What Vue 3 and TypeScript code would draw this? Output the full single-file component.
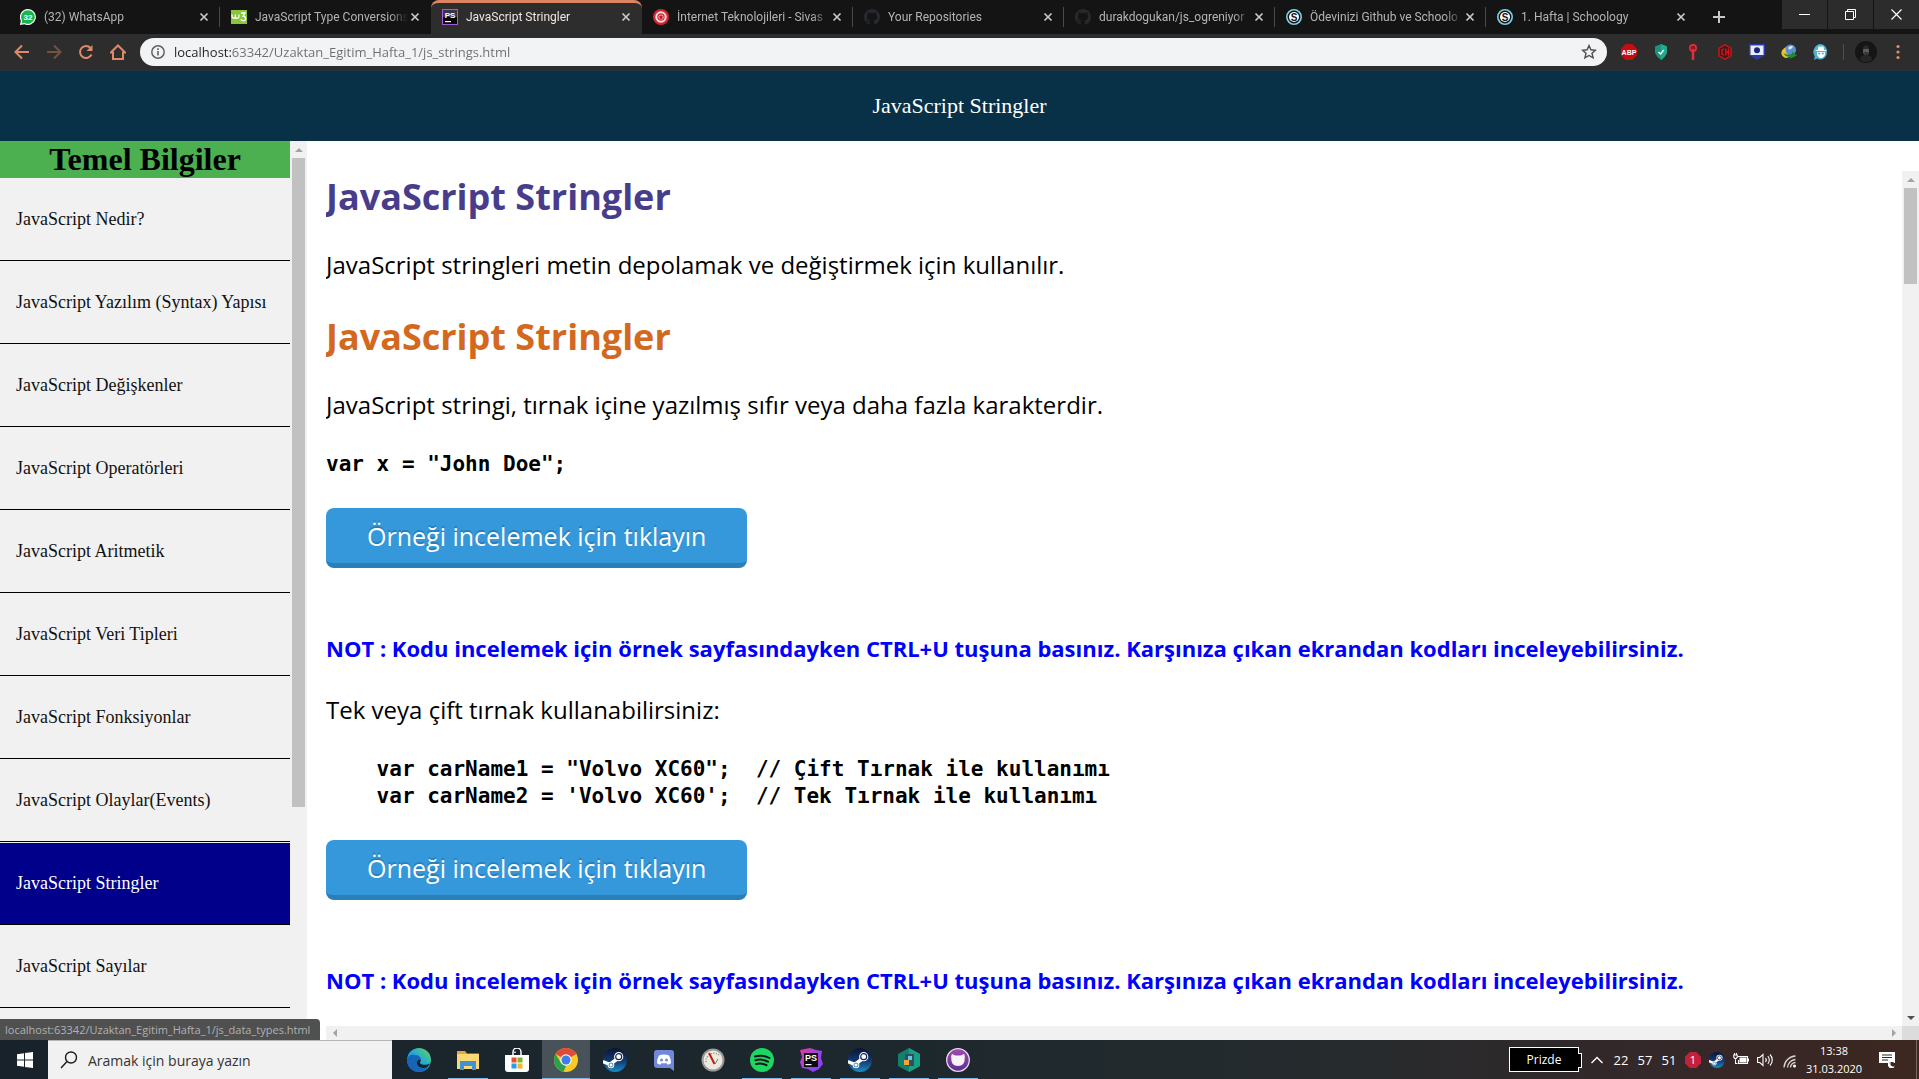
<script setup lang="ts">
import { ref } from 'vue'

interface Tab {
  icon: string
  title: string
}

interface TaskApp {
  icon: string
  label: string
  running?: boolean
  focused?: boolean
}

interface Mark {
  text: string
  x: number
  y: number
  size: number
  fill: string
}

const tabs: Tab[] = [
  { icon: 'whatsapp', title: '(32) WhatsApp' },
  { icon: 'w3', title: 'JavaScript Type Conversions' },
  { icon: 'ps', title: 'JavaScript Stringler' },
  { icon: 'rosette', title: 'İnternet Teknolojileri - Sivas' },
  { icon: 'github', title: 'Your Repositories' },
  { icon: 'github', title: 'durakdogukan/js_ogreniyor' },
  { icon: 'schoology', title: 'Ödevinizi Github ve Schoolo' },
  { icon: 'schoology', title: '1. Hafta | Schoology' },
]
const activeTab = 2

// lettering that sits on top of an icon's artwork
const marks: Record<string, Mark> = {
  whatsapp: { text: '32', x: 8, y: 11, size: 8, fill: '#fff' },
  ps: { text: 'PS', x: 8, y: 9, size: 8, fill: '#fff' },
  schoology: { text: 'S', x: 8, y: 12, size: 10, fill: '#101214' },
  abp: { text: 'ABP', x: 8, y: 11, size: 7, fill: '#fff' },
  phpstorm: { text: 'PS', x: 12, y: 13, size: 9, fill: '#fff' },
}

const address = ref('localhost:63342/Uzaktan_Egitim_Hafta_1/js_strings.html')
const search = ref('')

const extensions = ['abp', 'shield', 'key', 'ch', 'badge', 'idm', 'agent']

const topics: string[] = [
  'JavaScript Nedir?',
  'JavaScript Yazılım (Syntax) Yapısı',
  'JavaScript Değişkenler',
  'JavaScript Operatörleri',
  'JavaScript Aritmetik',
  'JavaScript Veri Tipleri',
  'JavaScript Fonksiyonlar',
  'JavaScript Olaylar(Events)',
  'JavaScript Stringler',
  'JavaScript Sayılar',
]
const activeTopic = 8

const note =
  'NOT : Kodu incelemek için örnek sayfasındayken CTRL+U tuşuna basınız. Karşınıza çıkan ekrandan kodları inceleyebilirsiniz.'

const codeSingle = 'var x = "John Doe";'
const codeQuotes = `    var carName1 = "Volvo XC60";  // Çift Tırnak ile kullanımı
    var carName2 = 'Volvo XC60';  // Tek Tırnak ile kullanımı`

const apps: TaskApp[] = [
  { icon: 'edge', label: 'Edge' },
  { icon: 'folder', label: 'Dosya Gezgini', running: true },
  { icon: 'store', label: 'Store' },
  { icon: 'chrome', label: 'Chrome', running: true, focused: true },
  { icon: 'steam', label: 'Steam' },
  { icon: 'discord', label: 'Discord' },
  { icon: 'gauge', label: 'Gauge' },
  { icon: 'spotify', label: 'Spotify', running: true },
  { icon: 'phpstorm', label: 'PhpStorm', running: true },
  { icon: 'steam', label: 'Steam', running: true },
  { icon: 'hexa', label: 'Kaspersky', running: true },
  { icon: 'ghdesk', label: 'GitHub Desktop', running: true },
]

const temperatures = ['22', '57', '51']
</script>

<template>
  <div class="screen">
    <svg class="defs" aria-hidden="true">
      <defs>
        <linearGradient id="gSteam" x1="0" y1="0" x2="0" y2="1">
          <stop offset="0" stop-color="#0b1436" /><stop offset=".55" stop-color="#123a73" /><stop offset="1" stop-color="#1a8ec4" />
        </linearGradient>
        <linearGradient id="gEdge" x1="0" y1="1" x2="1" y2="0">
          <stop offset="0" stop-color="#1479d4" /><stop offset=".5" stop-color="#22a6dc" /><stop offset="1" stop-color="#64d653" />
        </linearGradient>
        <linearGradient id="gPs" x1="0" y1="0" x2="1" y2="1">
          <stop offset="0" stop-color="#e8359c" /><stop offset=".5" stop-color="#9b46ea" /><stop offset="1" stop-color="#7b3ff2" />
        </linearGradient>
        <linearGradient id="gCat" x1="0" y1="0" x2="0" y2="1">
          <stop offset="0" stop-color="#a24bb0" /><stop offset="1" stop-color="#5b2f91" />
        </linearGradient>
      </defs>
      <symbol id="whatsapp" viewBox="0 0 16 16">
        <path d="M8 0a8 8 0 1 1-3.6 15.200L0 16l.8-4.300A8 8 0 0 1 8 0z" fill="#fff" />
        <path d="M8 1.200a6.800 6.800 0 1 1-3.400 12.700L1.600 14.500l.5-3A6.800 6.800 0 0 1 8 1.200z" fill="#16b84e" />
      </symbol>
      <symbol id="w3" viewBox="0 0 16 16">
        <rect y="1" width="16" height="14" fill="#8bc43f" />
        <path d="M1 5.500v2a1.700 1.700 0 0 0 3.400 0v-2 2a1.700 1.700 0 0 0 3.600 0v-2" fill="none" stroke="#fff" stroke-width="1.200" />
        <path d="M10 4h4L12 7.200c3.500 0 3.400 4.600.4 4.600-1.200 0-2-.5-2.500-1.400" fill="none" stroke="#fff" stroke-width="1.300" />
      </symbol>
      <symbol id="ps" viewBox="0 0 16 16">
        <rect x=".5" y=".5" width="15" height="15" fill="#050505" stroke="#a45bd6" />
        <rect x="1" y="1" width="14" height="7" fill="#3d3348" />
        <rect x="3" y="12" width="6" height="1.200" fill="#fff" />
      </symbol>
      <symbol id="rosette" viewBox="0 0 16 16">
        <circle cx="8" cy="8" r="8" fill="#cf2732" />
        <circle cx="8" cy="8" r="4.700" fill="#cf2732" stroke="#fbdcdc" stroke-width="2" />
        <circle cx="8" cy="8" r="2.600" fill="#f4a5a8" />
        <path d="M8 5.800l.7 1.500 1.600.2-1.200 1.100.3 1.600L8 9.400l-1.400.8.3-1.600-1.200-1.100 1.600-.2z" fill="#b5121d" />
      </symbol>
      <symbol id="github" viewBox="0 0 16 16">
        <path d="M8 0C3.580 0 0 3.580 0 8c0 3.540 2.290 6.530 5.470 7.590.4.070.55-.17.55-.38v-1.490c-2.010.37-2.530-.49-2.690-.94-.09-.23-.48-.94-.82-1.130-.28-.15-.68-.52-.01-.53.63-.01 1.080.58 1.230.82.720 1.210 1.870.87 2.330.66.070-.52.280-.87.510-1.070-1.780-.2-3.640-.89-3.640-3.950 0-.87.310-1.590.82-2.150-.08-.2-.36-1.020.08-2.120 0 0 .67-.21 2.200.82a7.600 7.600 0 0 1 4 0c1.530-1.040 2.200-.82 2.200-.82.440 1.100.160 1.920.080 2.120.510.560.820 1.270.820 2.150 0 3.070-1.870 3.750-3.650 3.950.290.250.540.730.540 1.480v2.200c0 .210.150.460.550.380A8 8 0 0 0 16 8c0-4.420-3.580-8-8-8z" fill="#262a2e" />
      </symbol>
      <symbol id="schoology" viewBox="0 0 16 16">
        <circle cx="8" cy="8" r="7.200" fill="#101214" stroke="#7fd0e6" stroke-width="1.600" />
        <circle cx="8" cy="8" r="5" fill="#fff" />
      </symbol>
      <symbol id="abp" viewBox="0 0 16 16">
        <path d="M4.700 0h6.600L16 4.700v6.600L11.300 16H4.700L0 11.300V4.700z" fill="#c70d11" />
      </symbol>
      <symbol id="shield" viewBox="0 0 16 16">
        <path d="M8 0l6 2.500v6.300L11.500 13 8 16l-3.500-3L2 8.800V2.500z" fill="#17967c" />
        <path d="M8 0l6 2.500v6.300L11.500 13 8 16z" fill="#1fab90" />
        <path d="M5.500 8l2 2 3.300-4" fill="none" stroke="#fff" stroke-width="1.500" />
      </symbol>
      <symbol id="key" viewBox="0 0 16 16">
        <circle cx="8" cy="4" r="3.200" fill="#8a1a20" stroke="#dc2f3a" stroke-width="1.700" />
        <path d="M8 6v9" stroke="#dc2f3a" stroke-width="2.600" stroke-linecap="round" />
      </symbol>
      <symbol id="ch" viewBox="0 0 16 16">
        <path d="M8 .8l6 3.400v7.600l-6 3.400-6-3.400V4.200z" fill="#4a1416" stroke="#c4161a" stroke-width="1.500" />
        <path d="M7 5L5 6v4l2 1M8.800 4.500v7M11.500 4.500v7M8.800 8h2.700" fill="none" stroke="#d3181c" stroke-width="1.300" />
      </symbol>
      <symbol id="badge" viewBox="0 0 16 16">
        <path d="M0 0h16v11l-8 5-8-5z" fill="#2e3aa8" />
        <rect x="1.500" y="1.500" width="13" height="9.500" fill="#e9ecfb" />
        <circle cx="8" cy="6.200" r="3" fill="#1d2675" />
      </symbol>
      <symbol id="idm" viewBox="0 0 16 16">
        <circle cx="9.500" cy="6" r="5.500" fill="#5d8ed3" />
        <path d="M7 4c1-2 4-2.500 5-1.500-1 2-2 3-4 3z" fill="#d5e7f8" />
        <path d="M5 3C1 5-1 9 1.500 12s6 2 8 0C6 11 4 8 5 3z" fill="#ecc22d" />
        <path d="M2.500 9c1 3 4 4.500 7 3.500l-1 2.500 7.500-3.500-5-4-.2 2.500C8 11 5 11 2.500 9z" fill="#1d8c2b" />
      </symbol>
      <symbol id="agent" viewBox="0 0 16 16">
        <path d="M8 0a8 8 0 0 1 0 15.500c-2 0-3-.5-4-1L1 16l.8-3.500A8 8 0 0 1 8 0z" fill="#4fb3cf" />
        <path d="M5.500 2.500h5l.8 3.500h2v1h-10.600v-1h2zM4 8h8v2c0 2-2 4-4 4s-4-2-4-4z" fill="#fff" />
        <circle cx="6.200" cy="9.500" r="1.100" fill="#4fb3cf" /><circle cx="9.800" cy="9.500" r="1.100" fill="#4fb3cf" />
      </symbol>
      <symbol id="edge" viewBox="0 0 24 24">
        <circle cx="12" cy="12" r="12" fill="url(#gEdge)" />
        <path d="M0 12C1 7 5 6 9 7c4 .8 5 3 5 5-3-1-5 2-3.500 5s5 4.500 10.500 2C17 25.500 6 25.500 2 18.500 0 15.500 0 13 0 12z" fill="#1565b8" />
        <path d="M10.500 17c-1.500-3 0-6 3.500-5-.4 1.500-1.400 2-1 3 .8 2 6 2.500 10 .5-1 2-2.500 3.500-3.500 4-4 1.500-7.500 0-9-2.500z" fill="#17222a" />
      </symbol>
      <symbol id="folder" viewBox="0 0 24 24">
        <path d="M1 3h8l2 2.500h12V20H1z" fill="#e5a93b" />
        <rect x="1" y="6" width="22" height="15" fill="#fbd775" />
        <path d="M4 13h16v9h-4v-4H8v4H4z" fill="#3f93cf" />
      </symbol>
      <symbol id="store" viewBox="0 0 24 24">
        <path d="M8 7V4a4 4 0 0 1 8 0v3M10 5V3.500" fill="none" stroke="#fff" stroke-width="1.500" />
        <path d="M0 7h24v14a3 3 0 0 1-3 3H3a3 3 0 0 1-3-3z" fill="#fff" />
        <path d="M6.500 9.500h5v5h-5z" fill="#e8502b" /><path d="M12.500 9.500h5v5h-5z" fill="#7ab829" />
        <path d="M6.500 15.500h5v5h-5z" fill="#22a0e8" /><path d="M12.500 15.500h5v5h-5z" fill="#f8b526" />
      </symbol>
      <symbol id="chrome" viewBox="0 0 24 24">
        <circle cx="12" cy="12" r="12" fill="#fbc926" />
        <path d="M12 12L1.600 6A12 12 0 0 1 22.400 6z" fill="#dd4b3a" />
        <path d="M1.600 6L7 15l5 3-2.500 5.700A12 12 0 0 1 1.600 6z" fill="#2aa04e" />
        <circle cx="12" cy="12" r="5.800" fill="#f4f4f4" /><circle cx="12" cy="12" r="4.500" fill="#3f7de8" />
      </symbol>
      <symbol id="steam" viewBox="0 0 24 24">
        <circle cx="12" cy="12" r="12" fill="url(#gSteam)" />
        <path d="M1 14l6 2.500L14 11" fill="none" stroke="#fff" stroke-width="3.500" stroke-linecap="round" />
        <circle cx="8" cy="17" r="3.300" fill="#fff" /><circle cx="15.700" cy="8.700" r="4.600" fill="#fff" />
        <circle cx="15.700" cy="8.700" r="3" fill="#fff" stroke="#14294f" stroke-width="1.200" />
        <circle cx="8" cy="17" r="2" fill="none" stroke="#1d4d80" stroke-width=".7" />
      </symbol>
      <symbol id="discord" viewBox="0 0 24 24">
        <path d="M5 2h14a3 3 0 0 1 3 3v18l-4-3H5a3 3 0 0 1-3-3V5a3 3 0 0 1 3-3z" fill="#7289da" />
        <path d="M7 7.500c3-1.500 7-1.500 10 0 1.500 2.500 2 5 2 7.500-1 1.200-2.500 1.500-3.500 1.500l-.8-1.200H9.300l-.8 1.200c-1 0-2.500-.3-3.500-1.500 0-2.500.5-5 2-7.500z" fill="#fff" />
        <circle cx="9.500" cy="12" r="1.500" fill="#7289da" /><circle cx="14.500" cy="12" r="1.500" fill="#7289da" />
      </symbol>
      <symbol id="gauge" viewBox="0 0 24 24">
        <circle cx="12" cy="12" r="11.500" fill="#9b9a94" /><circle cx="12" cy="12" r="9.500" fill="#eceae0" />
        <path d="M5 14a8 8 0 0 1 13-7" fill="none" stroke="#8f8d85" stroke-width="1.500" stroke-dasharray="1 1.500" />
        <path d="M8 5l5.500 11" stroke="#c01a12" stroke-width="2" /><path d="M14 16l3-5" stroke="#777" stroke-width="1" />
      </symbol>
      <symbol id="spotify" viewBox="0 0 24 24">
        <circle cx="12" cy="12" r="12" fill="#1ed760" />
        <path d="M5 8.500c5-1.500 10-1 14.500 1.500M5.500 12.300c4.500-1.300 8.500-.8 12.500 1.400M6 16c3.500-1 7-.6 10.500 1.200" fill="none" stroke="#10181a" stroke-width="2" stroke-linecap="round" />
      </symbol>
      <symbol id="phpstorm" viewBox="0 0 24 24">
        <path d="M1 2l10-2 6 2 6 1-1 7 2 6-4 5-6 3-5-3-6-1-2-6 2-5z" fill="url(#gPs)" />
        <rect x="5" y="5" width="14" height="14" fill="#0a0a0a" />
        <rect x="6.500" y="16" width="6" height="1.200" fill="#fff" />
      </symbol>
      <symbol id="hexa" viewBox="0 0 24 24">
        <path d="M12 0l11 6v12l-11 6-11-6V6z" fill="#12806c" /><path d="M12 0l11 6v12l-11 6z" fill="#17a085" />
        <rect x="8" y="6" width="9" height="12" fill="#2d4f60" /><rect x="11" y="8" width="4" height="4" fill="#6fc3dd" />
        <rect x="7" y="12" width="5" height="5" fill="#f2a53a" />
      </symbol>
      <symbol id="ghdesk" viewBox="0 0 24 24">
        <circle cx="12" cy="12" r="11.300" fill="url(#gCat)" stroke="#e9d9ef" stroke-width="1.300" />
        <path d="M6 6l3.500 1.500h5L18 6c1 2 1 3 .6 4.500C19 15 16.500 18 12 18s-7-3-6.600-7.500C5 9 5 8 6 6z" fill="#f7f1f8" />
      </symbol>
    </svg>

    <header class="browser">
      <div class="strip">
        <nav class="tabs" aria-label="Sekmeler">
          <div v-for="(tab, i) in tabs" :key="i" class="tab" :class="{ active: i === activeTab, plain: i === activeTab - 1 || i === tabs.length - 1 }">
            <svg class="i16">
              <use :href="'#' + tab.icon" />
              <text v-if="marks[tab.icon]" class="mark" :x="marks[tab.icon].x" :y="marks[tab.icon].y" :font-size="marks[tab.icon].size" :fill="marks[tab.icon].fill">{{ marks[tab.icon].text }}</text>
            </svg>
            <span class="tab-title">{{ tab.title }}</span>
            <button class="close" aria-label="Kapat">
              <svg width="10" height="10" viewBox="0 0 10 10"><path d="M1.500 1.500l7 7M8.500 1.500l-7 7" stroke="currentColor" stroke-width="1.700" /></svg>
            </button>
          </div>
          <button class="new-tab" aria-label="Yeni sekme">
            <svg width="12" height="12" viewBox="0 0 12 12"><path d="M6 0v12M0 6h12" stroke="currentColor" stroke-width="2" /></svg>
          </button>
        </nav>
        <div class="window-buttons">
          <button aria-label="Simge durumuna küçült"><svg width="11" height="11"><path d="M0 5.500h11" stroke="#fff" /></svg></button>
          <button aria-label="Önceki boyut"><svg width="11" height="11"><path d="M.5 2.500h8v8h-8zM2.500 2.500v-2h8v8h-2" fill="none" stroke="#fff" /></svg></button>
          <button aria-label="Pencereyi kapat"><svg width="11" height="11"><path d="M.5.5l10 10M10.500.5l-10 10" stroke="#fff" stroke-width="1.200" /></svg></button>
        </div>
      </div>
      <div class="toolbar">
        <button class="tool nav" aria-label="Geri"><svg class="i16" viewBox="0 0 16 16"><path d="M15 8H2M8 1.500L1.500 8 8 14.500" /></svg></button>
        <button class="tool nav dim" aria-label="İleri"><svg class="i16" viewBox="0 0 16 16"><path d="M1 8h13M8 1.500L14.500 8 8 14.500" /></svg></button>
        <button class="tool nav" aria-label="Yenile"><svg class="i16" viewBox="0 0 16 16"><path d="M13.500 10.500A6 6 0 1 1 12.500 4" /><path d="M14.500 1v6h-6z" class="solid" /></svg></button>
        <button class="tool nav" aria-label="Ana sayfa"><svg class="i16" viewBox="0 0 16 16"><path d="M.8 8.500L8 1.500l7.200 7H13V15H3V8.500z" /></svg></button>
        <div class="address">
          <svg width="14" height="14" viewBox="0 0 14 14"><circle cx="7" cy="7" r="6.200" fill="none" stroke="#5f6368" stroke-width="1.500" /><path d="M7 6v4.500M7 3.300v1.600" stroke="#5f6368" stroke-width="1.600" /></svg>
          <input v-model="address" type="text" aria-label="Adres" spellcheck="false" />
          <button class="star" aria-label="Yer işareti">
            <svg class="i16" viewBox="0 0 16 16"><path d="M8 1.500l1.900 4.300 4.600.4-3.500 3.100 1.100 4.600L8 11.500l-4.100 2.400L5 9.300 1.500 6.200l4.600-.4z" fill="none" stroke="#4a4d51" stroke-width="1.400" /></svg>
          </button>
        </div>
        <div class="extensions">
          <button v-for="name in extensions" :key="name" class="tool" :aria-label="name">
            <svg class="i16">
              <use :href="'#' + name" />
              <text v-if="marks[name]" class="mark" :x="marks[name].x" :y="marks[name].y" :font-size="marks[name].size" :fill="marks[name].fill">{{ marks[name].text }}</text>
            </svg>
          </button>
        </div>
        <span class="divider"></span>
        <button class="tool" aria-label="Profil">
          <svg width="22" height="22" viewBox="0 0 22 22"><circle cx="11" cy="11" r="11" fill="#151515" /><path d="M5 19c0-4 3-5 6-5s6 1 6 5a10 10 0 0 1-12 0z" fill="#262626" /><ellipse cx="11" cy="10" rx="3" ry="4" fill="#5f5f5f" /><path d="M8 8c0-5 6-5 6 0z" fill="#2b2b2b" /><path d="M9 11h4l-1 3h-2z" fill="#333" /></svg>
        </button>
        <button class="tool" aria-label="Menü">
          <svg class="i16" viewBox="0 0 16 16"><g fill="#e08e70"><circle cx="8" cy="2.500" r="1.600" /><circle cx="8" cy="8" r="1.600" /><circle cx="8" cy="13.500" r="1.600" /></g></svg>
        </button>
      </div>
    </header>

    <div class="page">
      <div class="banner">JavaScript Stringler</div>
      <div class="columns">
        <aside class="sidebar">
          <div class="side-list">
            <h2>Temel Bilgiler</h2>
            <ul>
              <li v-for="(topic, i) in topics" :key="topic">
                <a href="#" :class="{ active: i === activeTopic }">{{ topic }}</a>
              </li>
            </ul>
          </div>
          <div class="vbar side-bar" aria-hidden="true">
            <span class="arrow up"></span>
            <span class="track"><span class="thumb"></span></span>
            <span class="arrow down"></span>
          </div>
        </aside>
        <div class="pane">
          <div class="pane-row">
            <main class="lesson">
              <h1 class="indigo">JavaScript Stringler</h1>
              <p>JavaScript stringleri metin depolamak ve değiştirmek için kullanılır.</p>
              <h1 class="orange">JavaScript Stringler</h1>
              <p>JavaScript stringi, tırnak içine yazılmış sıfır veya daha fazla karakterdir.</p>
              <pre>{{ codeSingle }}</pre>
              <button class="example">Örneği incelemek için tıklayın</button>
              <p class="note">{{ note }}</p>
              <p>Tek veya çift tırnak kullanabilirsiniz:</p>
              <pre>{{ codeQuotes }}</pre>
              <button class="example">Örneği incelemek için tıklayın</button>
              <p class="note">{{ note }}</p>
            </main>
            <div class="vbar main-bar" aria-hidden="true">
              <span class="arrow up"></span>
              <span class="track"><span class="thumb"></span></span>
              <span class="arrow down"></span>
            </div>
          </div>
          <div class="hbar" aria-hidden="true">
            <span class="arrow left"></span>
            <span class="arrow right"></span>
            <span class="corner"></span>
          </div>
        </div>
      </div>
      <div class="status">localhost:63342/Uzaktan_Egitim_Hafta_1/js_data_types.html</div>
    </div>

    <footer class="taskbar">
      <button class="start" aria-label="Başlat">
        <svg class="i16" viewBox="0 0 16 16"><path d="M0 2.200l7-1v6.300H0zM8 1l8-1v7.500H8zM0 8.500h7v6.300l-7-1zM8 8.500h8V16l-8-1z" fill="#fff" /></svg>
      </button>
      <label class="search">
        <svg width="18" height="18" viewBox="0 0 18 18"><circle cx="11" cy="6.500" r="5.500" fill="none" stroke="#1c1c1c" stroke-width="1.400" /><path d="M7 10.500L1 17" stroke="#1c1c1c" stroke-width="1.400" /></svg>
        <input v-model="search" type="text" placeholder="Aramak için buraya yazın" aria-label="Ara" />
      </label>
      <div class="apps">
        <button v-for="(app, i) in apps" :key="i" :aria-label="app.label" :class="{ running: app.running, focused: app.focused }">
          <svg width="24" height="24">
            <use :href="'#' + app.icon" />
            <text v-if="marks[app.icon]" class="mark" :x="marks[app.icon].x" :y="marks[app.icon].y" :font-size="marks[app.icon].size" :fill="marks[app.icon].fill">{{ marks[app.icon].text }}</text>
          </svg>
        </button>
      </div>
      <div class="tray">
        <span class="power">Prizde</span>
        <span class="cell"><svg width="12" height="8" viewBox="0 0 12 8"><path d="M.5 7L6 1.500 11.500 7" fill="none" stroke="#fff" stroke-width="1.400" /></svg></span>
        <span v-for="t in temperatures" :key="t" class="cell">{{ t }}</span>
        <span class="cell">
          <svg class="i16" viewBox="0 0 16 16"><path d="M4.700 0h6.600L16 4.700v6.600L11.300 16H4.700L0 11.300V4.700z" fill="#c2213a" /><text x="8" y="12" text-anchor="middle" font-family="Open Sans" font-size="11" fill="#fff">1</text></svg>
        </span>
        <span class="cell"><svg class="i16"><use href="#steam" /></svg></span>
        <span class="cell"><svg class="i16" viewBox="0 0 16 16"><path d="M5 4.500h9.500v7H5.500V8M2.500 7v4.500h2M.8 3h3.400v2.500L2.500 7 .8 5.500zM1.500 1v2M3.500 1v2M15.500 6.500v3" fill="none" stroke="#fff" stroke-width="1.100" /><rect x="6.500" y="5.500" width="7" height="5" fill="#fff" /></svg></span>
        <span class="cell"><svg class="i16" viewBox="0 0 16 16"><path d="M.6 5.500h2.200L6 2.500v11l-3.200-3H.6zM8.500 6c.8 1 .8 3 0 4M10.800 4.200c2 2 2 5.600 0 7.600M13 2.500c3 3 3 8 0 11" fill="none" stroke="#fff" stroke-width="1.100" /></svg></span>
        <span class="cell"><svg class="i16" viewBox="0 0 16 16"><g fill="none" stroke="#d9d2cf" stroke-width="1.300"><path d="M3 15.500A12 12 0 0 1 14.500 4" /><path d="M6.500 15.500a8.500 8.500 0 0 1 8-8" /><path d="M9.500 15.500a5 5 0 0 1 5-5" /></g><circle cx="13.500" cy="14" r="1.500" fill="#fff" /></svg></span>
        <span class="clock"><span>13:38</span><span>31.03.2020</span></span>
        <span class="notes"><svg class="i16" viewBox="0 0 16 16"><path d="M0 0h16v11h-4l-3 4v-4H0z" fill="#fff" /><path d="M3 3h10M3 5.500h10M3 8h6" stroke="#38261f" stroke-width="1.100" /><circle cx="13" cy="13" r="3" fill="#38261f" /><path d="M12 10.500a3 3 0 1 0 3.500 3.500 2.500 2.500 0 0 1-3.500-3.500z" fill="#fff" /></svg></span>
      </div>
    </footer>
  </div>
</template>

<style>
body {
  margin: 0;
  overflow: hidden;
}
</style>

<style scoped>
.screen {
  display: flex;
  flex-direction: column;
  height: 100vh;
  font-family: 'Segoe UI', 'Open Sans', sans-serif;
  background: #fff;
}
.screen * {
  box-sizing: border-box;
}
.defs {
  position: absolute;
  width: 0;
  height: 0;
}
button {
  padding: 0;
  border: 0;
  background: none;
  font: inherit;
  color: inherit;
}
svg {
  display: block;
  flex: none;
}
.i16 {
  width: 16px;
  height: 16px;
}
.mark {
  font-family: 'Liberation Sans', sans-serif;
  font-weight: 700;
  text-anchor: middle;
}

/* browser frame */
.strip {
  display: flex;
  justify-content: space-between;
  height: 34px;
  background: #141414;
}
.tabs {
  display: flex;
  flex: 1;
  min-width: 0;
  padding-left: 9px;
}
.tab {
  position: relative;
  display: flex;
  flex: 0 1 211px;
  align-items: center;
  min-width: 0;
  padding: 0 11px;
  color: #b4b4b4;
  font-family: 'Segoe UI', Roboto, sans-serif;
  font-size: 12px;
}
.tab::after {
  content: '';
  position: absolute;
  right: 0;
  top: 7px;
  width: 1px;
  height: 20px;
  background: #4a4a4a;
}
.tab.active::after,
.tab.plain::after {
  display: none;
}
.tab.active {
  background: #2d2d2d;
  border-top: 3px solid #dd8560;
  border-radius: 8px 8px 0 0;
  padding-bottom: 3px;
  color: #eee6e2;
}
.tab-title {
  flex: 1;
  min-width: 0;
  margin: 0 2px 0 8px;
  overflow: hidden;
  white-space: nowrap;
  mask-image: linear-gradient(to right, #000 88%, transparent);
}
.close {
  width: 10px;
  height: 10px;
  color: #c8c8c8;
}
.new-tab {
  display: grid;
  place-items: center;
  width: 44px;
  color: #c8c8c8;
}
.window-buttons {
  display: flex;
  gap: 1px;
  height: 29px;
}
.window-buttons button {
  display: grid;
  place-items: center;
  width: 45px;
  background: #2c2c2c;
}
.toolbar {
  display: flex;
  align-items: center;
  height: 37px;
  padding: 0 5px 0 6px;
  background: #2d2d2d;
  border-bottom: 1px solid #25343c;
}
.tool {
  display: grid;
  place-items: center;
  width: 32px;
  height: 28px;
  color: #dd8a68;
}
.nav path {
  fill: none;
  stroke: currentColor;
  stroke-width: 2;
}
.nav path.solid {
  fill: currentColor;
  stroke: none;
}
.tool.dim {
  color: #745143;
}
.address {
  display: flex;
  flex: 1;
  align-items: center;
  gap: 9px;
  height: 28px;
  margin: 0 6px;
  padding: 0 10px 0 11px;
  border-radius: 14px;
  background: #f1f3f4;
}
.address input {
  flex: 1;
  min-width: 0;
  padding: 0;
  border: 0;
  outline: 0;
  font-family: 'Segoe UI', 'Open Sans', sans-serif;
  font-size: 13px;
  color: transparent;
  background: linear-gradient(to right, #202124 58px, #6a6e72 58px);
  background-clip: text;
  -webkit-background-clip: text;
}
.extensions {
  display: flex;
}
.divider {
  width: 1px;
  height: 16px;
  margin: 0 6px;
  background: #63483d;
}

/* page */
.page {
  position: relative;
  display: flex;
  flex: 1;
  flex-direction: column;
  min-height: 0;
}
.banner {
  height: 70px;
  flex: none;
  line-height: 70px;
  text-align: center;
  font-family: 'Liberation Serif', serif;
  font-size: 22px;
  color: #fff;
  background: #083147;
}
.columns {
  display: flex;
  flex: 1;
  min-height: 0;
}
.sidebar {
  display: flex;
  flex: 0 0 16%;
  min-width: 0;
  overflow: hidden;
  background: #f1f1f1;
  font-family: 'Liberation Serif', serif;
}
.side-list {
  flex: 1;
  overflow: hidden;
}
.side-list h2 {
  margin: 0;
  height: 37px;
  line-height: 37px;
  text-align: center;
  font-size: 32px;
  color: #000;
  background: #4caf50;
}
.side-list ul {
  margin: 0;
  padding: 0;
  list-style: none;
}
.side-list li {
  padding-top: 1px;
  border-bottom: 1px solid #000;
}
.side-list a {
  display: block;
  padding: 0 16px;
  line-height: 81px;
  font-size: 18px;
  color: #111;
  text-decoration: none;
  white-space: nowrap;
}
.side-list a.active {
  background: #00008b;
  color: #fff;
}

/* scroll bars */
.vbar {
  display: flex;
  flex: none;
  flex-direction: column;
  align-items: center;
  width: 17px;
  background: #f1f1f1;
}
.vbar .track {
  flex: 1;
  width: 13px;
}
.vbar .thumb {
  display: block;
  background: #c1c1c1;
}
.side-bar .thumb {
  height: 75%;
}
.main-bar .thumb {
  height: 96px;
}
.arrow {
  display: grid;
  flex: none;
  place-items: center;
  width: 17px;
  height: 17px;
}
.arrow::before {
  content: '';
  border: 4px solid transparent;
}
.arrow.up::before {
  border-top: 0;
  border-bottom-color: #a3a3a3;
}
.arrow.down::before {
  border-bottom: 0;
  border-top-color: #505050;
}
.arrow.left::before {
  border-left: 0;
  border-right-color: #a3a3a3;
}
.arrow.right::before {
  border-right: 0;
  border-left-color: #a3a3a3;
}
.hbar {
  display: flex;
  align-items: center;
  height: 14px;
  flex: none;
  background: #f1f1f1;
}
.hbar .right {
  margin-left: auto;
}
.corner {
  width: 17px;
  height: 14px;
  background: #dcdcdc;
}

/* lesson */
.pane {
  display: flex;
  flex: 1;
  flex-direction: column;
  min-width: 0;
  margin: 30px 0 0 19px;
}
.pane-row {
  display: flex;
  flex: 1;
  min-height: 0;
}
.lesson {
  flex: 1;
  min-width: 0;
  overflow: hidden;
  font-family: 'Comic Sans MS', 'Open Sans', sans-serif;
  font-size: 24px;
  line-height: 32px;
  color: #000;
}
.lesson h1 {
  margin: 0 0 26px;
  font-size: 36px;
  line-height: 52px;
}
.indigo {
  color: #483d8b;
}
.orange {
  color: #d2691e;
}
.lesson p {
  margin: 0 0 30px;
  white-space: nowrap;
}
.lesson pre {
  margin: 0 0 30px;
  font-family: 'DejaVu Sans Mono', monospace;
  font-size: 21px;
  font-weight: 700;
  line-height: 27px;
}
.example {
  display: block;
  height: 60px;
  margin-bottom: 64px;
  padding: 0 41px;
  border-bottom: 5px solid #2980b9;
  border-radius: 8px;
  font-size: 25px;
  color: #fff;
  text-shadow: 0 -2px #2980b9;
  background: #3498db;
}
.lesson .note {
  font-size: 22px;
  font-weight: 700;
  color: #00f;
}

.status {
  position: absolute;
  left: 0;
  bottom: 0;
  height: 21px;
  padding: 0 10px 0 5px;
  border-radius: 0 4px 0 0;
  line-height: 21px;
  font-size: 11px;
  color: #b0b0b0;
  background: #505050;
}

/* taskbar */
.taskbar {
  display: flex;
  flex: none;
  height: 39px;
  color: #fff;
  background: linear-gradient(to right, #18222b, #1c282e 45%, #262b2d 70%, #33282a 85%, #3d2720);
}
.start {
  display: grid;
  place-items: center;
  width: 48px;
  padding-left: 1px;
}
.search {
  display: flex;
  align-items: center;
  gap: 10px;
  width: 344px;
  padding-left: 12px;
  border-top: 1px solid #b5b5b5;
  background: #f1f1f1;
}
.search input {
  flex: 1;
  min-width: 0;
  padding: 0;
  border: 0;
  outline: 0;
  background: none;
  font-family: 'Segoe UI', 'Open Sans', sans-serif;
  font-size: 14px;
}
.search input::placeholder {
  color: #333;
}
.apps {
  display: flex;
  gap: 1px;
  padding-left: 3px;
}
.apps button {
  display: grid;
  place-items: center;
  width: 48px;
}
.apps .running {
  background: linear-gradient(#76b9ed, #76b9ed) bottom / 40px 1px no-repeat;
}
.apps .focused {
  background: linear-gradient(#76b9ed, #76b9ed) bottom / 100% 1px no-repeat #485258;
}
.tray {
  display: flex;
  align-items: center;
  margin-left: auto;
  padding-right: 2px;
}
.power {
  position: relative;
  width: 70px;
  height: 25px;
  margin-right: 6px;
  border: 1px solid #fff;
  line-height: 23px;
  text-align: center;
  font-size: 12px;
  background: #000;
}
.power::after {
  content: '';
  position: absolute;
  right: -4px;
  top: 5px;
  width: 3px;
  height: 13px;
  border: 1px solid #fff;
  border-left: 0;
  background: #000;
}
.cell {
  display: grid;
  place-items: center;
  width: 24px;
  font-size: 13px;
}
.clock {
  display: flex;
  flex-direction: column;
  align-items: center;
  width: 66px;
  font-size: 11px;
  line-height: 18px;
}
.notes {
  display: grid;
  place-items: center;
  width: 50px;
  height: 39px;
  padding-right: 10px;
  border-right: 1px solid #7a6a64;
}
</style>
